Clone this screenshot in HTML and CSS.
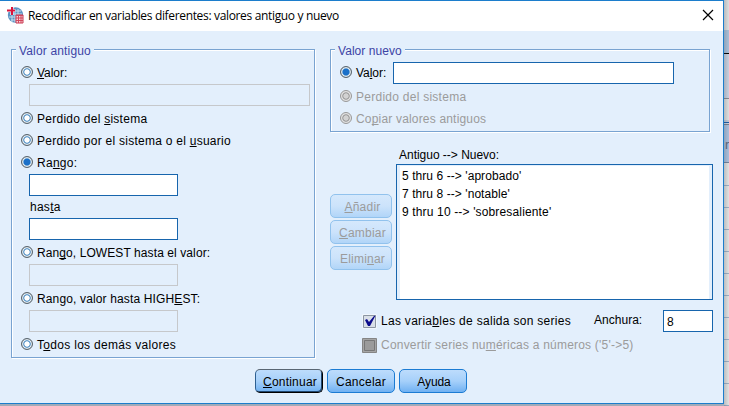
FILE: index.html
```html
<!DOCTYPE html>
<html lang="es">
<head>
<meta charset="utf-8">
<title>Recodificar en variables diferentes</title>
<link rel="stylesheet" href="styles.css">
</head>
<body>
<div class="backdrop"><span class="column-name">r</span></div>
<main class="dialog">
  <header class="titlebar">
    <svg class="app-icon" width="17" height="17" viewBox="0 0 17 17">
      <circle cx="8.5" cy="8" r="7.7" fill="#5d94c4"/>
      <path d="M5 4h9M3 7h12M2 10h13M4 13h9M5 2v13M8 2v13M11 2v13" stroke="#c5dcec" stroke-width="1"/>
      <path d="M5 0v8M0 3.5h8" stroke="#fff" stroke-width="3"/>
      <path d="M5 0v8M0 3.5h8" stroke="#d9143c" stroke-width="2"/>
      <path d="M9 8h7v8H9z" fill="#f7d5da" stroke="#c93850"/>
      <path d="M9 8.5h7M9 11h7M9 13.5h7M11.5 9v7M14 9v7" stroke="#d3465c"/>
    </svg>
    <h1>Recodificar en variables diferentes: valores antiguo y nuevo</h1>
    <svg class="close" width="12" height="12" viewBox="0 0 12 12"><path d="M1 1l10 10M11 1L1 11" stroke="#000" stroke-width="1.2"/></svg>
  </header>
  <div class="content">
    <fieldset class="group old">
      <legend>Valor antiguo</legend>
      <label class="option"><i class="radio"></i><span class="snug"><u>V</u>alor:</span></label>
      <div class="field wide off"></div>
      <label class="option"><i class="radio"></i><span>Perdido del <u>s</u>istema</span></label>
      <label class="option flush"><i class="radio"></i><span>Perdido por el sistema o el <u>u</u>suario</span></label>
      <label class="option flush"><i class="radio on"></i><span>Ra<u>n</u>go:</span></label>
      <div class="field"></div>
      <div class="until">has<u>t</u>a</div>
      <div class="field"></div>
      <label class="option"><i class="radio"></i><span class="lowest">Ran<u>g</u>o, LOWEST hasta el valor:</span></label>
      <div class="field off"></div>
      <label class="option"><i class="radio"></i><span class="highest">Rango, valor hasta HIGH<u>E</u>ST:</span></label>
      <div class="field off"></div>
      <label class="option"><i class="radio"></i><span class="others">T<u>o</u>dos los demás valores</span></label>
    </fieldset>
    <section class="right">
      <fieldset class="group new">
        <legend>Valor nuevo</legend>
        <div class="value-row">
          <label class="option"><i class="radio on"></i><span class="snug">Va<u>l</u>or:</span></label>
          <div class="field"></div>
        </div>
        <label class="option dim"><i class="radio"></i><span>Perdido del sistema</span></label>
        <label class="option dim flush"><i class="radio"></i><span class="copy">Co<u>p</u>iar valores antiguos</span></label>
      </fieldset>
      <div class="mapping">
        <div class="edit-buttons">
          <button class="button dim"><u>A</u>ñadir</button>
          <button class="button dim"><u>C</u>ambiar</button>
          <button class="button dim">Elimi<u>n</u>ar</button>
        </div>
        <div class="list-area">
          <div class="list-label">Antiguo --&gt; Nuevo:</div>
          <ul class="list">
            <li>5 thru 6 --&gt; 'aprobado'</li>
            <li>7 thru 8 --&gt; 'notable'</li>
            <li class="long">9 thru 10 --&gt; 'sobresaliente'</li>
          </ul>
        </div>
      </div>
      <div class="string-row">
        <label class="check-row"><svg class="check" width="15" height="15" viewBox="0 0 15 15"><path d="M.5.5h14v14H.5z" fill="#fff"/><path d="M1.5 1.5h12v12h-12z" fill="#d9dfe8" stroke="#8b95a2"/><path d="M3 6l2-1 2 3 5-6 1.5-.5L8 12H6z" fill="#0c0c8c"/></svg><span class="series">Las varia<u>b</u>les de salida son series</span></label>
        <span class="width-label">Anchura:</span>
        <div class="field width-field">8</div>
      </div>
      <label class="check-row dim convert"><svg class="check" width="15" height="15" viewBox="0 0 15 15"><path d="M.5.5h14v14H.5z" fill="#a5a5a5" stroke="#858585"/><path d="M2.5 2.5h10v10h-10z" fill="#9b9b9b" stroke="#777"/></svg><span>Convertir series nu<u>m</u>éricas a números ('5'-&gt;5)</span></label>
    </section>
  </div>
  <footer class="actions">
    <button class="button primary"><u>C</u>ontinuar</button>
    <button class="button">Cancelar</button>
    <button class="button help">Ayuda</button>
  </footer>
</main>
</body>
</html>
```
FILE: styles.css
```css
* { box-sizing: border-box; }

body {
  margin: 0;
  width: 729px;
  height: 406px;
  overflow: hidden;
  background: #a3abb8;
  font: 12px/22px "Liberation Sans", Arial, sans-serif;
  letter-spacing: 0.26px;
  color: #000;
}

u { text-decoration: underline; text-underline-offset: 1px; text-decoration-thickness: 1px; text-decoration-skip-ink: none; }

/* Sheet visible around the dialog */
.backdrop {
  position: absolute;
  left: 724px;
  top: 0;
  width: 5px;
  height: 406px;
  overflow: hidden;
  background:
    linear-gradient(90deg, rgba(60, 65, 75, .22), rgba(60, 65, 75, 0)),
    linear-gradient(#dedede 30px, #a9bfd8 30px 53px, #000 53px 54px, #c8d0df 54px 98px, #85898f 98px 99px, #dedede 99px 120px, #bfc9d8 120px 122px, #1d5ba5 122px 123px, #c9d6e7 123px 124px, #777f8d 124px 125px, #aabfdc 125px 162px, #71839e 162px 163px, transparent 163px),
    repeating-linear-gradient(#e1e1e1 0 20px, #9cafc5 20px 21px, #e1e1e1 21px 22px);
  background-position: 0 0, 0 0, 0 165px;
}
.column-name { position: absolute; left: 1px; top: 134px; color: #5b6577; font-size: 13px; }

.dialog {
  position: relative;
  width: 724px;
  height: 404px;
  background: #e3effc;
  border: solid #1c7dcc;
  border-width: 1px 1px 1px 0;
}

.titlebar {
  display: flex;
  align-items: center;
  height: 30px;
  padding: 0 9px 0 7px;
  background: #fff;
}
.app-icon { margin-top: -1px; }
h1 {
  flex: 1;
  margin: 0 0 1px 4px;
  font: 12px/20px "Open Sans", "Noto Sans", sans-serif;
  letter-spacing: -0.34px;
  white-space: nowrap;
}
.close { margin-top: -2px; }

.content { display: flex; gap: 15px; padding: 18px 10px 0 11px; }

.group {
  position: relative;
  min-width: 0;
  margin: 0;
  padding: 11px 4px 0 9px;
  border: 1px solid #79a3d1;
  box-shadow: 1px 1px 0 #fff, inset 1px 1px 0 #fff;
}
legend {
  position: absolute;
  left: 4px;
  top: -8px;
  padding: 0 3px;
  line-height: 18px;
  letter-spacing: 0.16px;
  background: #e3effc;
  color: #3c44a5;
}
.old { width: 304px; height: 309px; }
.new { width: 380px; height: 83px; padding-top: 12px; }
.new legend { letter-spacing: 0.05px; }

.option {
  display: flex;
  align-items: center;
  gap: 4px;
  height: 22px;
  margin-top: 1px;
  white-space: nowrap;
}
.option span { padding-top: 1px; }
.option .snug { letter-spacing: -0.05px; }
.lowest { letter-spacing: 0.09px; }
.highest { letter-spacing: 0.14px; }
.others { letter-spacing: 0.3px; }
.copy { letter-spacing: 0.18px; }
.old legend + .option, .option.flush { margin-top: 0; }

.radio {
  width: 12px;
  height: 12px;
  border: 1px solid #58646d;
  border-radius: 50%;
  background: radial-gradient(circle, #fff 0 2.3px, #6fa3cf 2.9px 3.5px, #e4edf3 4.1px 4.4px, #b5bec5 5px);
}
.radio.on { background: radial-gradient(circle, #1b70c8 0 3.1px, #7fb0dc 3.6px, #e4edf3 4.2px 4.4px, #b5bec5 5px); }

.dim { color: #9b9b9b; }
.dim .radio { border-color: #989898; background: radial-gradient(circle, #d2d2d2 0 2.3px, #a2a2a2 2.9px 3.4px, #e2e2e2 4.1px); }

.field {
  width: 149px;
  height: 22px;
  margin-left: 8px;
  background: #fff;
  border: 1px solid #1765ad;
}
.field.wide { width: 281px; margin-top: 1px; }
.field.off { background: #e3effc; border-color: #c6c8cb; }
.option + .field { margin-top: 1px; }
.until { height: 22px; padding-left: 9px; }

.right { width: 383px; }
.value-row { display: flex; height: 22px; }
.value-row .option { width: 53px; margin: -1px 0 0; }
.value-row .field { width: 281px; margin: 0; }
.new > .option.dim { margin-top: 1px; }
.new > .option.flush { margin-top: 0; }

.mapping { display: flex; gap: 4px; margin-top: 12px; }
.edit-buttons { display: flex; flex-direction: column; gap: 2px; padding-top: 50px; }
.list-area { width: 317px; }
.list-label { height: 20px; padding-left: 3px; letter-spacing: -0.02px; }
.list {
  height: 136px;
  margin: 0;
  padding: 2px 0 0 3px;
  list-style: none;
  line-height: 18px;
  background: #fff;
  border: 1px solid #1765ad;
  box-shadow: inset 3px 1px 0 #e3effc, inset -3px 0 0 #e3effc;
}
.list li { padding-left: 2px; letter-spacing: 0.07px; }
.list .long { letter-spacing: 0.15px; }

.button {
  width: 62px;
  height: 24px;
  padding: 1px 0 0;
  border: 1px solid #1b7bd3;
  border-radius: 5px;
  background: linear-gradient(#bddcfc, #a6d0fa 50%, #70b1f2);
  font: inherit;
  letter-spacing: 0.22px;
  color: #000;
}
.button.dim { padding-left: 3px; color: #9b9b9b; border-color: #91c2ed; background: linear-gradient(#d5e8fc, #cce3fb 50%, #b1d5f8); }
.button.primary { padding-left: 2px; border-color: #596673 #000 #000 #2d5f91; box-shadow: inset -1px -1px 0 #1f4770; }
.button.help { letter-spacing: -0.1px; padding-left: 2px; }

.string-row { display: flex; height: 22px; margin-top: 10px; }
.check-row { display: flex; align-items: center; gap: 4px; white-space: nowrap; }
.string-row .check-row { width: 264px; padding-left: 32px; }
.series { letter-spacing: 0.29px; }
.width-label { width: 69px; line-height: 20px; letter-spacing: 0.02px; }
.width-field { width: 50px; margin: 0; padding-left: 3px; }
.convert { height: 22px; margin-top: 2px; padding-left: 32px; letter-spacing: 0.21px; }

.actions { position: absolute; left: 255px; top: 368px; display: flex; gap: 4px; }
.actions .button { width: 68px; }
```
